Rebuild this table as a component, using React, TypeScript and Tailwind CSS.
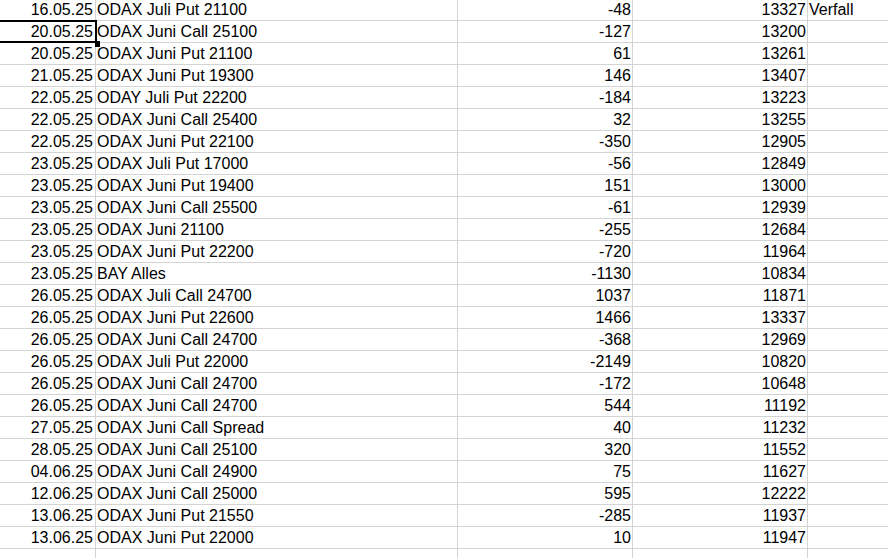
import React from "react";

const rows: [string, string, string, string, string][] = [
  ["16.05.25", "ODAX Juli Put 21100", "-48", "13327", "Verfall"],
  ["20.05.25", "ODAX Juni Call 25100", "-127", "13200", ""],
  ["20.05.25", "ODAX Juni Put 21100", "61", "13261", ""],
  ["21.05.25", "ODAX Juni Put 19300", "146", "13407", ""],
  ["22.05.25", "ODAY Juli Put 22200", "-184", "13223", ""],
  ["22.05.25", "ODAX Juni Call 25400", "32", "13255", ""],
  ["22.05.25", "ODAX Juni Put 22100", "-350", "12905", ""],
  ["23.05.25", "ODAX Juli Put 17000", "-56", "12849", ""],
  ["23.05.25", "ODAX Juni Put 19400", "151", "13000", ""],
  ["23.05.25", "ODAX Juni Call 25500", "-61", "12939", ""],
  ["23.05.25", "ODAX Juni 21100", "-255", "12684", ""],
  ["23.05.25", "ODAX Juni Put 22200", "-720", "11964", ""],
  ["23.05.25", "BAY Alles", "-1130", "10834", ""],
  ["26.05.25", "ODAX Juli Call 24700", "1037", "11871", ""],
  ["26.05.25", "ODAX Juni Put 22600", "1466", "13337", ""],
  ["26.05.25", "ODAX Juni Call 24700", "-368", "12969", ""],
  ["26.05.25", "ODAX Juli Put 22000", "-2149", "10820", ""],
  ["26.05.25", "ODAX Juni Call 24700", "-172", "10648", ""],
  ["26.05.25", "ODAX Juni Call 24700", "544", "11192", ""],
  ["27.05.25", "ODAX Juni Call Spread", "40", "11232", ""],
  ["28.05.25", "ODAX Juni Call 25100", "320", "11552", ""],
  ["04.06.25", "ODAX Juni Call 24900", "75", "11627", ""],
  ["12.06.25", "ODAX Juni Call 25000", "595", "12222", ""],
  ["13.06.25", "ODAX Juni Put 21550", "-285", "11937", ""],
  ["13.06.25", "ODAX Juni Put 22000", "10", "11947", ""],
  ["", "", "", "", ""],
];

const cell =
  "h-[22px] border-b border-r border-[#d4d4d4] flex items-end pb-[1px] leading-[18px] whitespace-nowrap overflow-hidden";

export default function App() {
  return (
    <div
      className="relative w-[888px] h-[558px] overflow-hidden bg-white text-black text-[16px]"
      style={{ fontFamily: '"Liberation Sans", Arial, sans-serif' }}
    >
      <div className="mt-[-1px] grid grid-cols-[96px_362px_175px_175px_100px]">
        {rows.map((r, i) => (
          <React.Fragment key={i}>
            <div className={`${cell} justify-end pr-[2px]`}>{r[0]}</div>
            <div className={`${cell} justify-start pl-[1px]`}>{r[1]}</div>
            <div className={`${cell} justify-end pr-[1px]`}>{r[2]}</div>
            <div className={`${cell} justify-end pr-[1px]`}>{r[3]}</div>
            <div className={`${cell} justify-start pl-[1px]`}>{r[4]}</div>
          </React.Fragment>
        ))}
      </div>
      <div className="absolute left-[-3px] top-[20px] w-[100px] h-[23px] border-2 border-black pointer-events-none" />
      <div className="absolute left-[95px] top-[41px] w-[5px] h-[6px] bg-black" />
    </div>
  );
}
